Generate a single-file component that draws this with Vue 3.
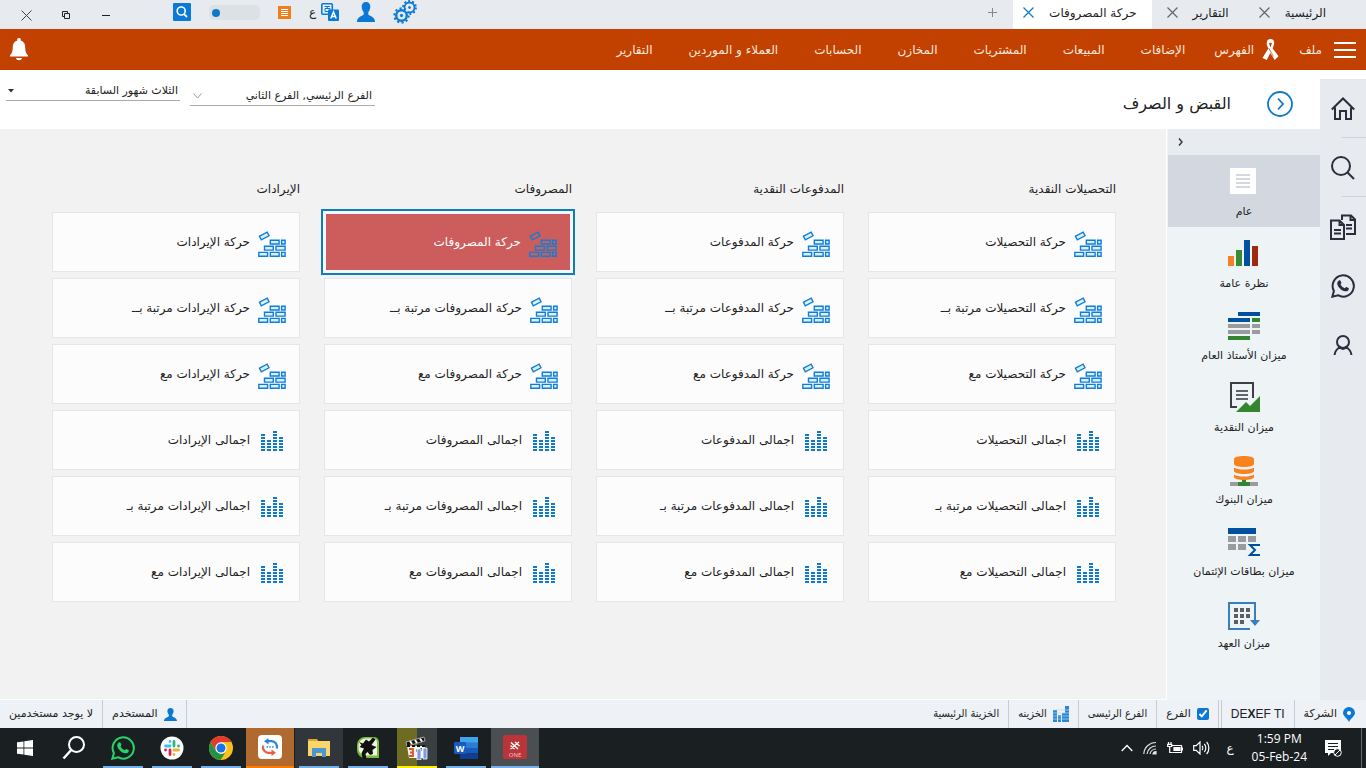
<template>
  <div class="app" dir="rtl">
    <svg class="sprite" aria-hidden="true">
      <symbol id="bricks" viewBox="0 0 28 30">
        <g stroke="#0f7ed6" stroke-width="1.400">
          <path d="M1.500 9.200 9.200 5.200 11 8.800 3.300 12.800Z" />
          <path d="M12.300 13.200h8.800v3.800h-8.800zM23.600 13.200h3.500v3.800h-3.500zM6.500 19.300h8.800v3.800H6.500zM18 19.300h9.100v3.800H18zM.8 25.400h8.800v3.800H.8zM12.300 25.400h8.800v3.800h-8.800zM23.600 25.400h3.500v3.800h-3.500z" />
        </g>
      </symbol>
      <symbol id="levels" viewBox="0 0 28 30">
        <rect v-for="b in levelBlocks" :key="b.x + '-' + b.y" :x="b.x" :y="b.y" width="4" height="2" fill="#0f7ac8" />
      </symbol>
      <symbol id="person" viewBox="0 0 18 20">
        <path fill="#0a78d4" d="M9 0c3 0 4.500 2 4.300 5-.2 2.500-1 4-2 5.200v2.300c.8 1.500 6.700 1.800 6.700 7.500H0c0-5.700 5.900-6 6.700-7.500v-2.300c-1-1.200-1.800-2.700-2-5.200C4.500 2 6 0 9 0Z" />
      </symbol>
      <symbol id="whats" viewBox="0 0 24 24">
        <path fill="none" stroke="currentColor" stroke-width="2" d="M1.300 22.700l1.600-5.700A10.600 10.600 0 1 1 7 21.200Z" />
        <path fill="currentColor" d="M8.200 6.300c.5-.3 1-.2 1.300.4l.9 2c.2.500-.6 1.200-.9 1.600.9 1.900 2.300 3.200 4.300 4 .5-.5 1.100-1.600 1.600-1.300l2.100 1c.5.300.3 1.200 0 1.900-.6 1.100-2 1.600-3.200 1.400-3.900-.8-7-3.600-8-7.100-.4-1.700.6-3.200 1.900-3.900Z" />
      </symbol>
    </svg>

    <header class="titlebar">
      <nav class="tabs">
        <div v-for="tab in tabs" :key="tab.name" class="tab" :class="{ active: tab.name === activeTab }">
          <a href="#" @click.prevent="activeTab = tab.name">{{ tab.name }}</a>
          <button type="button" aria-label="إغلاق">
            <svg width="11" height="11" viewBox="0 0 11 11"><path d="M.5.5l10 10M10.500.5l-10 10" fill="none" /></svg>
          </button>
        </div>
        <button type="button" class="add-tab" aria-label="إضافة">
          <svg width="9" height="9" viewBox="0 0 9 9"><path d="M4.500 0v9M0 4.500h9" stroke="#888" /></svg>
        </button>
      </nav>

      <div class="tools" dir="ltr">
        <div class="window-buttons">
          <button type="button" aria-label="إغلاق النافذة">
            <svg width="11" height="11" viewBox="0 0 11 11"><path d="M.5.5l10 10M10.500.5l-10 10" stroke="#444" fill="none" /></svg>
          </button>
          <button type="button" aria-label="استعادة">
            <svg width="8" height="8" viewBox="0 0 8 8"><path d="M2.500 2.500h5v5h-5zM5.500 2V.5h-5v5H2" stroke="#222" fill="none" /></svg>
          </button>
          <button type="button" aria-label="تصغير">
            <svg width="8" height="8" viewBox="0 0 8 8"><path d="M0 4.500h8" stroke="#222" /></svg>
          </button>
        </div>
        <button type="button" aria-label="بحث">
          <svg width="18" height="18" viewBox="0 0 18 18">
            <rect width="18" height="18" rx="1" fill="#0a7ad6" />
            <circle cx="8.200" cy="8" r="4" fill="none" stroke="#fff" stroke-width="1.600" />
            <path d="M11 11l3 3" stroke="#fff" stroke-width="1.800" />
          </svg>
        </button>
        <button type="button" class="switch" role="switch" aria-checked="false" aria-label="الوضع"><span></span></button>
        <button type="button" aria-label="القائمة">
          <svg width="13" height="13" viewBox="0 0 13 13">
            <rect width="13" height="13" fill="#ee7f1d" />
            <path d="M3 3.500h7M3 5.500h7M3 7.500h7M3 9.500h7" stroke="#fff" />
          </svg>
        </button>
        <button type="button" class="lang">
          <span>ع</span>
          <svg width="18" height="18" viewBox="0 0 18 18">
            <rect x=".8" y=".8" width="10.500" height="10.500" rx="1" fill="#e8f2fb" stroke="#0a7ad6" stroke-width="1.600" />
            <path d="M3.500 3.500h5.500M6.200 3v2.500M4 5.500h5v3H4z" stroke="#0a7ad6" fill="none" />
            <rect x="7" y="6.500" width="11" height="11.500" rx="1" fill="#0a7ad6" />
            <path d="M9.800 15.500 12.500 9l2.700 6.500M10.800 13.400h3.400" stroke="#fff" stroke-width="1.500" fill="none" />
          </svg>
        </button>
        <button type="button" aria-label="الحساب"><svg width="18" height="20"><use href="#person" /></svg></button>
        <button type="button" aria-label="الإعدادات">
          <svg width="24" height="24" viewBox="0 0 24 24" fill="none" stroke="#0a7ad6">
            <circle cx="16.500" cy="7.500" r="5" stroke-width="1.800" />
            <circle cx="16.500" cy="7.500" r="6.400" stroke-width="2" stroke-dasharray="2 2" />
            <circle cx="16.500" cy="7.500" r="1" fill="#0a7ad6" />
            <circle cx="8.500" cy="15.500" r="7.800" fill="#e7ebf0" stroke="none" />
            <circle cx="8.500" cy="15.500" r="5.300" stroke-width="2.400" />
            <circle cx="8.500" cy="15.500" r="7.200" stroke-width="2" stroke-dasharray="2.200 2.320" />
            <circle cx="8.500" cy="15.500" r="1.200" fill="#0a7ad6" />
          </svg>
        </button>
      </div>
    </header>

    <nav class="menubar">
      <button type="button" class="burger" aria-label="القائمة الرئيسية"><i></i><i></i><i></i></button>
      <a href="#" class="file">ملف</a>
      <a href="#" class="index">
        <svg width="17" height="21" viewBox="0 0 18 20" preserveAspectRatio="none">
          <path fill="#fff" fill-rule="evenodd" d="M9 0c3 0 4.200 2 3.800 4.500-.2 1.500-.8 3-1.500 4.500L17.500 16.500 13.500 20 8.800 13.300 5 20 .5 18 6.700 9C5.700 7 5 5.500 5 4 5 1.500 6.500 0 9 0Zm0 3.500c-1.300 0-1.600.5-1.400 1.300L9 7.700l1.300-2.900c.2-.8-.1-1.300-1.300-1.300Z" />
          <path d="M7 8.500l5 8" stroke="#c24000" stroke-width=".7" />
        </svg>
        الفهرس
      </a>
      <a v-for="m in menu" :key="m" href="#">{{ m }}</a>
      <button type="button" class="bell" aria-label="التنبيهات">
        <svg width="18" height="24" viewBox="0 0 18 24">
          <path fill="#fff" d="M9 0a2 2 0 0 1 1.700 2.600C14 3.500 15 6 15.200 9c.2 4 .4 6 2.800 8.300v1.200H0v-1.200C2.400 15 2.600 13 2.800 9 3 6 4 3.500 7.300 2.600A2 2 0 0 1 9 0ZM6 20h6c-.3 3-5.700 3-6 0Z" />
        </svg>
      </button>
    </nav>

    <div class="body">
      <aside class="rail">
        <button v-for="r in rail" :key="r.id" type="button" :class="{ line: r.line }" :aria-label="r.label">
          <svg v-if="r.id === 'home'" width="24" height="24" viewBox="0 0 24 24" class="stroke">
            <path d="M.8 12.500 12 1.500l11.200 11M4 10.500V22h5v-8h6v8h5V10.500" />
          </svg>
          <svg v-else-if="r.id === 'search'" width="24" height="24" viewBox="0 0 24 24" class="stroke">
            <circle cx="10" cy="10" r="9" /><path d="M16.500 16.500l6.500 6.500" />
          </svg>
          <svg v-else-if="r.id === 'docs'" width="26" height="26" viewBox="0 0 26 26" class="stroke">
            <path d="M12 6V1.500h9l4 4V20h-9M20.500 1.500V6H25M16 11h6M16 14.500h6" />
            <path d="M1 6.500h8.500L14 11v14H1zM9.500 6.500V11H14M4 16h7M4 19.500h7" />
          </svg>
          <svg v-else-if="r.id === 'chat'" width="24" height="24" color="#2b2d3c"><use href="#whats" /></svg>
          <svg v-else width="20" height="20" viewBox="0 0 20 20" class="stroke">
            <circle cx="10" cy="7" r="6" /><path d="M1.500 20c.5-4 3-6.500 5.500-8 1.500 2.500 4.500 2.500 6 0 2.500 1.500 5 4 5.500 8" />
          </svg>
        </button>
      </aside>

      <div class="page">
        <div class="page-head">
          <button type="button" class="go" aria-label="التالي">
            <svg width="28" height="28" viewBox="0 0 28 28" fill="none" stroke="#0f78c8" stroke-width="1.800">
              <circle cx="14" cy="14" r="12" /><path d="M12 8.500l5 5.500-5 5.500" />
            </svg>
          </button>
          <h1>القبض و الصرف</h1>
          <div class="filters">
            <label class="filter branch">
              <select aria-label="الفرع"><option>الفرع الرئيسي, الفرع الثاني</option></select>
              <svg width="9" height="6" viewBox="0 0 9 6"><path d="M.5.5l4 4.500 4-4.500" fill="none" stroke="#999" /></svg>
            </label>
            <label class="filter">
              <select aria-label="الفترة"><option>الثلاث شهور السابقة</option></select>
              <svg width="6" height="4" viewBox="0 0 6 4"><path d="M0 0h6L3 3.500z" fill="#333" /></svg>
            </label>
          </div>
        </div>

        <div class="workspace">
          <aside class="sidebar">
            <button type="button" class="collapse" aria-label="طي">
              <svg width="5" height="8" viewBox="0 0 5 8"><path d="M1 .5 4 4 1 7.500" fill="none" stroke="#333" stroke-width="1.400" /></svg>
            </button>
            <button v-for="s in sections" :key="s.id" type="button" class="section" :class="{ active: s.id === activeSection }" @click="activeSection = s.id">
              <svg width="32" height="32" viewBox="0 0 32 32">
                <g v-if="s.id === 'general'">
                  <rect x="2" y="2" width="26" height="26" fill="#fff" />
                  <path d="M8 9h14M8 13h14M8 17h14M8 21h14" stroke="#d3d7e0" stroke-width="2" />
                </g>
                <g v-else-if="s.id === 'overview'">
                  <path fill="#f58220" d="M0 18h6v10H0z" /><path fill="#3a8a34" d="M8 12h6v16H8z" />
                  <path fill="#0050a0" d="M16 2h6v26h-6z" /><path fill="#a02810" d="M24 8h6v20h-6z" />
                </g>
                <g v-else-if="s.id === 'ledger'">
                  <path fill="#0050a0" d="M10 2h22v4H10zM0 8h22v4H0z" />
                  <path fill="#999b9e" d="M0 14h22v4H0zM24 14h8v4h-8zM0 20h22v4H0zM24 20h8v4h-8z" />
                  <path fill="#338530" d="M24 8h8v4h-8zM0 26h22v4H0z" />
                </g>
                <g v-else-if="s.id === 'cash'">
                  <path fill="none" stroke="#3c4044" stroke-width="2" d="M9 25H3V1h22v15" />
                  <path stroke="#60646a" stroke-width="2" d="M8 9h12M8 13h12M8 17h12" />
                  <path fill="#338530" d="M8 30 18 20l4 4 10-10v16z" />
                </g>
                <g v-else-if="s.id === 'banks'">
                  <path fill="#f7821e" d="M6 5c0-4 20-4 20 0v5c0 4-20 4-20 0zM6 13.500c4 2.700 16 2.700 20 0V17c0 4-20 4-20 0zM6 20.500c4 2.700 16 2.700 20 0V23c0 4-20 4-20 0z" />
                  <path fill="#999b9e" d="M2 28h28v4H2z" /><path fill="#338530" d="M14 26h4v2h4v4H10v-4h4z" />
                </g>
                <g v-else-if="s.id === 'cards'">
                  <path fill="#0050a0" d="M0 2h28v6H0z" />
                  <path fill="#999b9e" d="M0 10h8v6H0zM10 10h8v6h-8zM20 10h8v6h-8zM0 18h8v6H0zM10 18h8v6h-8z" />
                  <path fill="none" stroke="#0050a0" stroke-width="2" d="M32 19H22l5 5-5 5h10" />
                </g>
                <g v-else>
                  <path fill="none" stroke="#3880bd" stroke-width="2" d="M22 31H1V5h26v18" />
                  <path fill="#3880bd" d="M22 22h10l-5 6z" />
                  <path fill="#5c5f64" d="M6 10h4v4H6zM12 10h4v4h-4zM18 10h4v4h-4zM6 16h4v4H6zM12 16h4v4h-4zM18 16h4v4h-4zM6 22h4v4H6zM12 22h4v4h-4z" />
                </g>
              </svg>
              <span>{{ s.label }}</span>
            </button>
          </aside>

          <main class="board">
            <section v-for="g in groups" :key="g.title" class="group">
              <h2>{{ g.title }}</h2>
              <button
                v-for="(c, i) in g.cards"
                :key="c"
                type="button"
                class="card"
                :class="{ selected: c === selected }"
                @click="selected = c"
              >
                <svg width="28" height="30"><use :href="i < 3 ? '#bricks' : '#levels'" /></svg>
                <span>{{ c }}</span>
              </button>
            </section>
          </main>
        </div>
      </div>
    </div>

    <footer class="status">
      <div class="cell">
        <svg width="12" height="15" viewBox="0 0 12 15">
          <path fill="#0a78d4" d="M6 0a6 6 0 0 1 6 6c0 3-4 5-6 9C4 11 0 9 0 6a6 6 0 0 1 6-6Z" /><circle cx="6" cy="6" r="2" fill="#fff" />
        </svg>
        الشركة
      </div>
      <div class="cell brand" dir="ltr">DE<b>X</b>EF TI</div>
      <div class="cell split">
        <input id="branch" v-model="branchOn" type="checkbox" />
        <label for="branch">الفرع</label>
      </div>
      <div class="cell narrow">الفرع الرئيسى</div>
      <div class="cell narrow">
        <svg width="16" height="16" viewBox="0 0 16 16"><path fill="#2a86d4" d="M0 4h4v12H0zM5 9h3v7H5zM9 7h3v9H9zM12 0h4v16h-4z" /><path d="M0 4h16M0 7h16M0 10h16M0 13h16" stroke="#b9d9f2" stroke-width=".7" /></svg>
        الخزينه
      </div>
      <div class="cell narrow">الخزينة الرئيسية</div>
      <div class="cell user">
        <svg width="13" height="13" viewBox="0 0 18 20" preserveAspectRatio="none"><use href="#person" width="18" height="20" /></svg>
        المستخدم
      </div>
      <div class="cell">لا يوجد مستخدمين</div>
    </footer>

    <div class="taskbar" dir="ltr">
      <button v-for="t in tasks" :key="t.id" type="button" class="task" :class="[t.id, t.state]" :aria-label="t.id">
        <svg v-if="t.id === 'start'" width="16" height="16" viewBox="0 0 16 16"><path fill="#fff" d="M0 2.300 6.500 1.400v6.200H0zM7.300 1.300 16 0v7.600H7.300zM0 8.400h6.500v6.200L0 13.700zM7.300 8.400H16V16l-8.700-1.300z" /></svg>
        <svg v-else-if="t.id === 'find'" width="24" height="24" viewBox="0 0 24 24" fill="none" stroke="#fff" stroke-width="2"><circle cx="14.500" cy="8.500" r="7.500" /><path d="M9.200 14 1.500 22.500" stroke-width="2.500" /></svg>
        <svg v-else-if="t.id === 'whatsapp'" width="24" height="24" color="#25d366"><use href="#whats" /></svg>
        <svg v-else-if="t.id === 'slack'" width="24" height="24" viewBox="0 0 24 24" stroke-width="2.800" stroke-linecap="round">
          <circle cx="12" cy="12" r="11.500" fill="#fff" />
          <path d="M10 5.500v.1M5.500 10H10" stroke="#36c5f0" /><path d="M14 5.500V10M18.500 10h.1" stroke="#2eb67d" />
          <path d="M18.500 14H14M14 18.500v.1" stroke="#ecb22e" /><path d="M10 18.500V14M5.500 14h.1" stroke="#e01e5a" />
        </svg>
        <svg v-else-if="t.id === 'chrome'" width="24" height="24" viewBox="0 0 24 24">
          <circle cx="12" cy="12" r="12" fill="#fbc116" />
          <path fill="#e33b2e" d="M1.600 6A12 12 0 0 1 22.400 6H12l-5.200 9z" />
          <path fill="#229342" d="M1.600 6 6.800 15 12 18l-2 5.800A12 12 0 0 1 1.600 6Z" />
          <path fill="#229342" d="M12 18l4-.8-4.500 6.800-2.500-.4z" />
          <circle cx="12" cy="12" r="5.700" fill="#fff" /><circle cx="12" cy="12" r="4.500" fill="#1a73e8" />
        </svg>
        <svg v-else-if="t.id === 'sync'" width="24" height="24" viewBox="0 0 24 24">
          <rect width="24" height="24" rx="4" fill="#fff" />
          <path d="M18.800 13.500c.9-4-1.500-7.300-5.300-7.300H9" fill="none" stroke="#2684d8" stroke-width="2.200" /><path fill="#2684d8" d="M10.500 3v6.400L6 6.200z" />
          <path d="M5.200 10.500c-.9 4 1.500 7.300 5.300 7.300H15" fill="none" stroke="#ec5b45" stroke-width="2.200" /><path fill="#ec5b45" d="M13.500 14.600V21l4.500-3.200z" />
          <path d="M8.500 12h1.500M11.300 12h1.500M14.100 12h1.500" stroke="#2684d8" stroke-width="1.500" />
        </svg>
        <svg v-else-if="t.id === 'explorer'" width="22" height="20" viewBox="0 0 22 20">
          <path fill="#e0a42c" d="M0 1h9l2 3H0z" /><path fill="#fbd568" d="M0 3h22v15H0z" />
          <path fill="#4a97d8" d="M4 10h14v9h-4v-4H8v4H4z" />
        </svg>
        <svg v-else-if="t.id === 'brush'" width="22" height="24" viewBox="0 0 22 24">
          <path fill="#7cba3a" d="M8 1h9a5 5 0 0 1 5 5v16H8a8 8 0 0 1-8-8V9a8 8 0 0 1 8-8Z" />
          <path fill="#eef5e2" d="M8 2.500h8a4 4 0 0 1 4 4v13H8.500a7 7 0 0 1-7-7V9.500a7 7 0 0 1 6.500-7Z" />
          <path fill="#111" d="M2 6l4 1.500L9 3.500l3 2L16 1.500l2.500 2-4 5.500 5 2-4 3 .5 4-3 1-2.500-3-2 2L9.500 23l-4-1-1-5L7 12.500 2.500 11l2-2z" />
        </svg>
        <svg v-else-if="t.id === 'media'" width="24" height="24" viewBox="0 0 24 24">
          <path fill="#111" stroke="#eee" stroke-width=".6" d="M1 6 19 1l1 4L2 10z" /><path stroke="#fff" stroke-width="2" d="M5 5l2 3M10 4l2 3M15 2.500l2 3" />
          <path fill="#f4f4f4" d="M2 10h18v12H4z" /><path stroke="#111" stroke-width="2" stroke-dasharray="3 2" d="M2 10h18" />
          <path fill="none" stroke="#e0551b" stroke-width="1.800" d="M4 13h4v7H4M5 16.500h3" /><path fill="none" stroke="#2e7d32" stroke-width="1.800" d="M12 13v3M16 12v3" />
          <path fill="#7a9be0" stroke="#fff" stroke-width=".8" d="M12 13h4v11h-4zM18 12h4v11h-4z" />
        </svg>
        <svg v-else-if="t.id === 'word'" width="24" height="22" viewBox="0 0 24 22">
          <path fill="#41a5ee" d="M6 0h18v6H6z" /><path fill="#2b7cd3" d="M6 5.500h18V11H6z" /><path fill="#185abd" d="M6 11h18v5.500H6z" /><path fill="#103f91" d="M6 16.500h18V22H6z" />
          <rect y="5" width="12" height="12" rx="1" fill="#185abd" />
          <text x="6" y="14.500" fill="#fff" font-size="9" font-weight="700" text-anchor="middle">W</text>
        </svg>
        <svg v-else width="24" height="24" viewBox="0 0 24 24">
          <rect width="24" height="24" rx="2" fill="#b9353a" />
          <path d="M8 7.500l7 6.500M16 7l-8.500 7M12 7l4.500 4M7.500 10.500l4 3.500" stroke="#fff" stroke-width="1.300" />
          <text x="12" y="21.500" fill="#f3c9c9" font-size="6" text-anchor="middle">ONE</text>
        </svg>
      </button>

      <div class="tray">
        <svg width="12" height="8" viewBox="0 0 12 8"><path d="M.7 7 6 1.500 11.300 7" fill="none" stroke="#fff" stroke-width="1.300" /></svg>
        <svg width="14" height="14" viewBox="0 0 14 14" fill="none" stroke="#ddd" stroke-width="1.200"><path d="M.8 13A12 12 0 0 1 13 1.500M4 13a9 9 0 0 1 9-8M7 13a6 6 0 0 1 6-5" /><path fill="#fff" d="M10 13a3 3 0 0 1 3-2.500V13z" /></svg>
        <svg width="16" height="12" viewBox="0 0 16 12" fill="none" stroke="#fff" stroke-width="1.200"><path d="M5 3.500h9.500v7H5.500M15.500 5.500v3" /><path fill="#fff" d="M7 5.500h6v3H7z" /><path d="M1.500 0v2M4 0v2M.7 2.300h4v2.200h-4zM2.700 4.500v6h3" /></svg>
        <svg width="17" height="14" viewBox="0 0 17 14" fill="none" stroke="#fff" stroke-width="1.200"><path d="M.7 4.700h2.500L7 1v12L3.200 9.300H.7zM9 5c1 1 1 3 0 4M11.300 3c2 2 2 6 0 8M13.600 1c3 3 3 9 0 12" /></svg>
        <span class="kbd">ع</span>
        <div class="clock"><span>1:59 PM</span><span>05-Feb-24</span></div>
        <svg width="17" height="17" viewBox="0 0 17 17"><path fill="#fff" d="M0 0h16v13H6l-3 3v-3H0z" /><path d="M3 3.500h10M3 6.500h10M3 9.500h6" stroke="#1a2022" /><circle cx="12.500" cy="12.500" r="3.800" fill="#1a2022" stroke="#fff" /><path d="M10 15l5-5" stroke="#fff" /></svg>
        <i class="peek"></i>
      </div>
    </div>
  </div>
</template>

<script setup>
import { ref } from 'vue'

const activeTab = ref('حركة المصروفات')
const activeSection = ref('general')
const selected = ref('حركة المصروفات')
const branchOn = ref(true)

const tabs = [{ name: 'الرئيسية' }, { name: 'التقارير' }, { name: 'حركة المصروفات' }]

const menu = ['الإضافات', 'المبيعات', 'المشتريات', 'المخازن', 'الحسابات', 'العملاء و الموردين', 'التقارير']

const rail = [
  { id: 'home', label: 'الرئيسية', line: true },
  { id: 'search', label: 'بحث', line: true },
  { id: 'docs', label: 'المستندات' },
  { id: 'chat', label: 'واتساب' },
  { id: 'user', label: 'المستخدم' }
]

const sections = [
  { id: 'general', label: 'عام' },
  { id: 'overview', label: 'نظرة عامة' },
  { id: 'ledger', label: 'ميزان الأستاذ العام' },
  { id: 'cash', label: 'ميزان النقدية' },
  { id: 'banks', label: 'ميزان البنوك' },
  { id: 'cards', label: 'ميزان بطاقات الإئتمان' },
  { id: 'custody', label: 'ميزان العهد' }
]

function makeGroup(title, noun) {
  return {
    title,
    cards: [
      `حركة ${noun}`,
      `حركة ${noun} مرتبة بــ`,
      `حركة ${noun} مع`,
      `اجمالى ${noun}`,
      `اجمالى ${noun} مرتبة بـ`,
      `اجمالى ${noun} مع`
    ]
  }
}

const groups = [
  makeGroup('التحصيلات النقدية', 'التحصيلات'),
  makeGroup('المدفوعات النقدية', 'المدفوعات'),
  makeGroup('المصروفات', 'المصروفات'),
  makeGroup('الإيرادات', 'الإيرادات')
]

// number of stacked blocks in each column of the levels icon
const levelBlocks = [6, 4, 7, 5].flatMap((n, col) =>
  Array.from({ length: n }, (_, i) => ({ x: 3 + col * 6, y: 24 - i * 3 }))
)

const tasks = [
  { id: 'start', state: '' },
  { id: 'find', state: '' },
  { id: 'whatsapp', state: 'running' },
  { id: 'slack', state: 'running' },
  { id: 'chrome', state: 'running' },
  { id: 'sync', state: 'alert' },
  { id: 'explorer', state: 'running hover' },
  { id: 'brush', state: 'running' },
  { id: 'media', state: 'running' },
  { id: 'word', state: 'running' },
  { id: 'dexef', state: 'current' }
]
</script>

<style>
body {
  margin: 0;
}
</style>

<style scoped>
.app {
  display: flex;
  flex-direction: column;
  min-height: 100vh;
  background: #fff;
  color: #222;
  font: 12px/16px 'DejaVu Sans', sans-serif;
}

.app * {
  box-sizing: border-box;
}

.sprite {
  position: absolute;
  width: 0;
  height: 0;
}

button {
  padding: 0;
  border: 0;
  background: none;
  color: inherit;
  font: inherit;
  cursor: pointer;
}

a {
  color: inherit;
  text-decoration: none;
}

svg {
  display: block;
  flex: none;
}

.titlebar {
  display: flex;
  justify-content: space-between;
  height: 29px;
  background: #e7ebf0;
}

.tabs {
  display: flex;
  padding-right: 25px;
}

.tab {
  display: flex;
  align-items: center;
  gap: 15px;
  padding: 0 15px 4px;
}

.tab path {
  stroke: #666;
  stroke-width: 1.2;
}

.tab.active {
  padding-left: 10px;
  background: #fff;
}

.tab.active path {
  stroke: #0f78c8;
}

.add-tab {
  margin-right: 16px;
  padding-bottom: 5px;
}

.tools {
  display: flex;
  align-items: center;
  gap: 18px;
  padding-bottom: 5px;
}

.window-buttons {
  display: flex;
  align-items: center;
  margin-right: 29px;
  padding: 6px 0 0 6px;
}

.window-buttons button {
  display: grid;
  place-items: center;
  width: 40px;
}

.switch {
  width: 51px;
  height: 15px;
  padding: 4px 3px;
  border-radius: 5px;
  background: #dce1e6;
}

.switch span {
  display: block;
  width: 8px;
  height: 8px;
  border-radius: 50%;
  background: #0f78c8;
}

.lang {
  display: flex;
  align-items: center;
  gap: 5px;
}

.menubar {
  display: flex;
  align-items: center;
  gap: 36px;
  height: 41px;
  padding: 0 10px;
  background: #c24000;
  color: #fbe9dc;
}

.burger {
  display: flex;
  flex-direction: column;
  gap: 5px;
}

.burger i {
  width: 22px;
  height: 2px;
  background: #fff;
}

.file {
  margin-right: -24px;
}

.index {
  display: flex;
  align-items: center;
  gap: 8px;
  margin-right: -16px;
  margin-left: -7px;
}

.bell {
  margin-right: auto;
}

.body {
  display: flex;
  flex: 1;
}

.rail {
  width: 46px;
  margin-top: 9px;
  background: #e7eaef;
}

.rail button {
  display: grid;
  place-items: center;
  width: 100%;
  height: 59px;
}

.rail .line {
  background: linear-gradient(#cdd1d8, #cdd1d8) right bottom / 24px 1px no-repeat;
}

.stroke {
  fill: none;
  stroke: #2b2d3c;
  stroke-width: 2;
}

.page {
  display: flex;
  flex: 1;
  flex-direction: column;
}

.page-head {
  display: flex;
  height: 59px;
  padding: 0 26px 0 6px;
}

.go {
  align-self: center;
  padding-top: 8px;
}

h1 {
  align-self: center;
  margin: 8px 35px 0 0;
  font-size: 16px;
  line-height: 24px;
  font-weight: 400;
}

.filters {
  display: flex;
  align-items: flex-start;
  gap: 10px;
  margin-right: auto;
  padding-top: 12px;
}

.filter {
  display: flex;
  align-items: center;
  width: 174px;
  height: 19px;
  padding: 0 2px;
  border-bottom: 1px solid #aaa;
  font-size: 11px;
}

.branch {
  width: 185px;
  margin-top: 5px;
  padding: 0 3px;
}

.filter select {
  flex: 1;
  min-width: 0;
  padding: 0;
  border: 0;
  appearance: none;
  background: none;
  color: #222;
  font: inherit;
}

.workspace {
  display: flex;
  flex: 1;
}

.sidebar {
  width: 154px;
  padding-left: 1px;
  border-left: 1px solid #fff;
  background: #eef3f6;
}

.collapse {
  display: flex;
  align-items: center;
  justify-content: flex-end;
  width: 100%;
  height: 26px;
  padding-left: 10px;
  background: #e8ecf1;
}

.section {
  display: flex;
  flex-direction: column;
  align-items: center;
  gap: 6px;
  width: 100%;
  height: 72px;
  padding-top: 11px;
  font-size: 11px;
}

.section.active {
  background: #d3d7e0;
}

.board {
  display: grid;
  flex: 1;
  grid-template-columns: repeat(4, 1fr);
  gap: 24px;
  align-items: start;
  padding: 49px 50px 48px 52px;
  border-bottom: 1px solid #fff;
  background: #f2f2f2;
}

.group {
  display: flex;
  flex-direction: column;
  gap: 6px;
}

h2 {
  margin: 0 0 6px;
  font-size: 12px;
  line-height: 22px;
  font-weight: 400;
}

.card {
  display: flex;
  align-items: center;
  gap: 8px;
  height: 60px;
  padding: 0 13px;
  border: 1px solid #e4e6e8;
  background: #fcfcfc;
  fill: #dcf0fc;
}

.card.selected {
  border: 2px solid #f6fafb;
  background: #cd5c5c;
  background-clip: padding-box;
  box-shadow: 0 0 0 1px #f6fafb, 0 0 0 3px #107eb4;
  color: #fff;
  fill: none;
}

.status {
  display: flex;
  height: 28px;
  background: #eef2f6;
  font-size: 11px;
}

.cell {
  display: flex;
  align-items: center;
  gap: 6px;
  padding: 0 9px;
  border-left: 1px solid #c8ccd0;
}

.cell:first-child {
  padding-right: 11px;
}

.cell:nth-child(6),
.cell:last-child {
  border-left: 0;
}

.narrow {
  font-family: 'DejaVu Sans Condensed', 'DejaVu Sans', sans-serif;
}

.user {
  margin-right: auto;
  border-right: 1px solid #c8ccd0;
}

.brand {
  gap: 0;
  font: 12px/16px 'Liberation Sans', sans-serif;
}

.split {
  margin-right: 2px;
  border-right: 1px solid #c8ccd0;
}

.split input {
  width: 12px;
  height: 12px;
  margin: 0;
  accent-color: #0a78d4;
}

.taskbar {
  display: flex;
  gap: 1px;
  height: 40px;
  padding-left: 1px;
  background: #1a2022;
  color: #fff;
  font-family: 'Open Sans', 'DejaVu Sans', sans-serif;
}

.task {
  display: grid;
  place-items: center;
  width: 48px;
}

.running {
  background: linear-gradient(#76b0e8, #76b0e8) center bottom / 40px 2px no-repeat;
}

.hover {
  background-color: #30363b;
}

.alert {
  border-bottom: 2px solid #ff7a00;
  background: #b06a30;
}

.media {
  background: linear-gradient(#ffee00, #ffee00) center bottom / 40px 2px no-repeat,
    linear-gradient(90deg, #6e6b22 50%, #3a3f42 50%) center / 40px 100% no-repeat;
}

.current {
  border-bottom: 2px solid #76b0e8;
  background: #4b4f51;
}

.tray {
  display: flex;
  align-items: center;
  gap: 10px;
  margin-left: auto;
  padding-right: 4px;
}

.kbd {
  margin: 0 8px 0 6px;
}

.clock {
  display: flex;
  flex-direction: column;
  align-items: center;
  margin-right: 8px;
  line-height: 18px;
}

.peek {
  width: 1px;
  height: 40px;
  margin-left: 9px;
  background: #666;
}
</style>
